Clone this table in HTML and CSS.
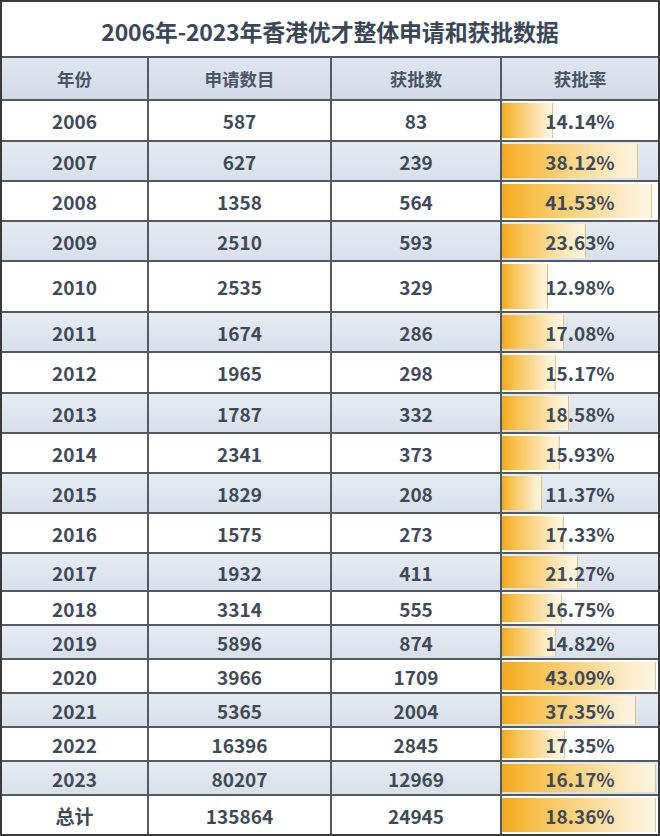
FILE: index.html
```html
<!DOCTYPE html>
<html lang="zh-CN">
<head>
<meta charset="utf-8">
<title>2006年-2023年香港优才整体申请和获批数据</title>
<link rel="stylesheet" href="styles.css">
</head>
<body>
<div class="sheet">
  <div class="title">2006年-2023年香港优才整体申请和获批数据</div>
  <div class="row head h43"><div class="c">年份</div><div class="c">申请数目</div><div class="c">获批数</div><div class="c last">获批率</div></div>
  <div class="row h41"><div class="c">2006</div><div class="c">587</div><div class="c">83</div><div class="c last rate"><span class="bar" style="width:51px"></span><span class="v">14.14%</span></div></div>
  <div class="row alt h40"><div class="c">2007</div><div class="c">627</div><div class="c">239</div><div class="c last rate"><span class="bar" style="width:136px"></span><span class="v">38.12%</span></div></div>
  <div class="row h40"><div class="c">2008</div><div class="c">1358</div><div class="c">564</div><div class="c last rate"><span class="bar" style="width:150px"></span><span class="v">41.53%</span></div></div>
  <div class="row alt h40"><div class="c">2009</div><div class="c">2510</div><div class="c">593</div><div class="c last rate"><span class="bar" style="width:84px"></span><span class="v">23.63%</span></div></div>
  <div class="row h51"><div class="c">2010</div><div class="c">2535</div><div class="c">329</div><div class="c last rate"><span class="bar" style="width:46px"></span><span class="v">12.98%</span></div></div>
  <div class="row alt h40"><div class="c">2011</div><div class="c">1674</div><div class="c">286</div><div class="c last rate"><span class="bar" style="width:62px"></span><span class="v">17.08%</span></div></div>
  <div class="row h41"><div class="c">2012</div><div class="c">1965</div><div class="c">298</div><div class="c last rate"><span class="bar" style="width:54px"></span><span class="v">15.17%</span></div></div>
  <div class="row alt h40"><div class="c">2013</div><div class="c">1787</div><div class="c">332</div><div class="c last rate"><span class="bar" style="width:67px"></span><span class="v">18.58%</span></div></div>
  <div class="row h40"><div class="c">2014</div><div class="c">2341</div><div class="c">373</div><div class="c last rate"><span class="bar" style="width:58px"></span><span class="v">15.93%</span></div></div>
  <div class="row alt h40"><div class="c">2015</div><div class="c">1829</div><div class="c">208</div><div class="c last rate"><span class="bar" style="width:40px"></span><span class="v">11.37%</span></div></div>
  <div class="row h40"><div class="c">2016</div><div class="c">1575</div><div class="c">273</div><div class="c last rate"><span class="bar" style="width:62px"></span><span class="v">17.33%</span></div></div>
  <div class="row alt h38"><div class="c">2017</div><div class="c">1932</div><div class="c">411</div><div class="c last rate"><span class="bar" style="width:76px"></span><span class="v">21.27%</span></div></div>
  <div class="row h34"><div class="c">2018</div><div class="c">3314</div><div class="c">555</div><div class="c last rate"><span class="bar" style="width:60px"></span><span class="v">16.75%</span></div></div>
  <div class="row alt h34"><div class="c">2019</div><div class="c">5896</div><div class="c">874</div><div class="c last rate"><span class="bar" style="width:54px"></span><span class="v">14.82%</span></div></div>
  <div class="row h34"><div class="c">2020</div><div class="c">3966</div><div class="c">1709</div><div class="c last rate"><span class="bar" style="width:154px"></span><span class="v">43.09%</span></div></div>
  <div class="row alt h34"><div class="c">2021</div><div class="c">5365</div><div class="c">2004</div><div class="c last rate"><span class="bar" style="width:134px"></span><span class="v">37.35%</span></div></div>
  <div class="row h34"><div class="c">2022</div><div class="c">16396</div><div class="c">2845</div><div class="c last rate"><span class="bar" style="width:63px"></span><span class="v">17.35%</span></div></div>
  <div class="row alt h34"><div class="c">2023</div><div class="c">80207</div><div class="c">12969</div><div class="c last rate"><span class="bar" style="width:154px"></span><span class="v">16.17%</span></div></div>
  <div class="row h40 end"><div class="c">总计</div><div class="c">135864</div><div class="c">24945</div><div class="c last rate"><span class="bar" style="width:154px"></span><span class="v">18.36%</span></div></div>
</div>
</body>
</html>
```

FILE: styles.css
```css
* { box-sizing: border-box; }
html, body { margin: 0; padding: 0; background: #ffffff; }
body {
  font-family: "Noto Sans CJK SC", "Noto Sans", sans-serif;
  color: #3f4a58;
}
.sheet {
  width: 660px;
  height: 836px;
  border: 2px solid #3a3a3a;
  border-bottom: none;
  display: flex;
  flex-direction: column;
  overflow: hidden;
}
.title {
  height: 56px;
  flex: none;
  display: flex;
  align-items: center;
  justify-content: center;
  font-size: 23px;
  font-weight: 700;
  color: #3b4756;
  letter-spacing: -0.2px;
  background: #ffffff;
  border-bottom: 2px solid #555a60;
  padding-top: 4px;
}
.row {
  flex: none;
  display: grid;
  grid-template-columns: 147px 183px 170px 156px;
  border-bottom: 2px solid #555a60;
  background: #ffffff;
}
.row.end { border-bottom: 2px solid #3a3a3a; }
.row.alt { background: linear-gradient(#e6ebf2, #d8e0ea); }
.row.head { background: linear-gradient(#dfe6ef, #d3dbe7); }
.h43 { height: 43px; }
.h41 { height: 41px; }
.h40 { height: 40px; }
.h51 { height: 51px; }
.h38 { height: 38px; }
.h34 { height: 34px; }
.c {
  display: flex;
  align-items: center;
  justify-content: center;
  border-right: 2px solid #555a60;
  font-size: 19px;
  font-weight: 700;
  line-height: 1;
  color: #3f4a59;
}
.c.last { border-right: none; }
.head .c { font-size: 17.5px; color: #4a5668; }
.rate { position: relative; }
.bar {
  position: absolute;
  left: 0;
  top: 2px;
  bottom: 2px;
  background: linear-gradient(to right, #f4aa1c 0%, #f8c455 25%, #fbdc9a 60%, #fdeecb 85%, #fef5e2 100%);
  border-right: 1px solid #e6c27e;
}
.v { position: relative; }
```
